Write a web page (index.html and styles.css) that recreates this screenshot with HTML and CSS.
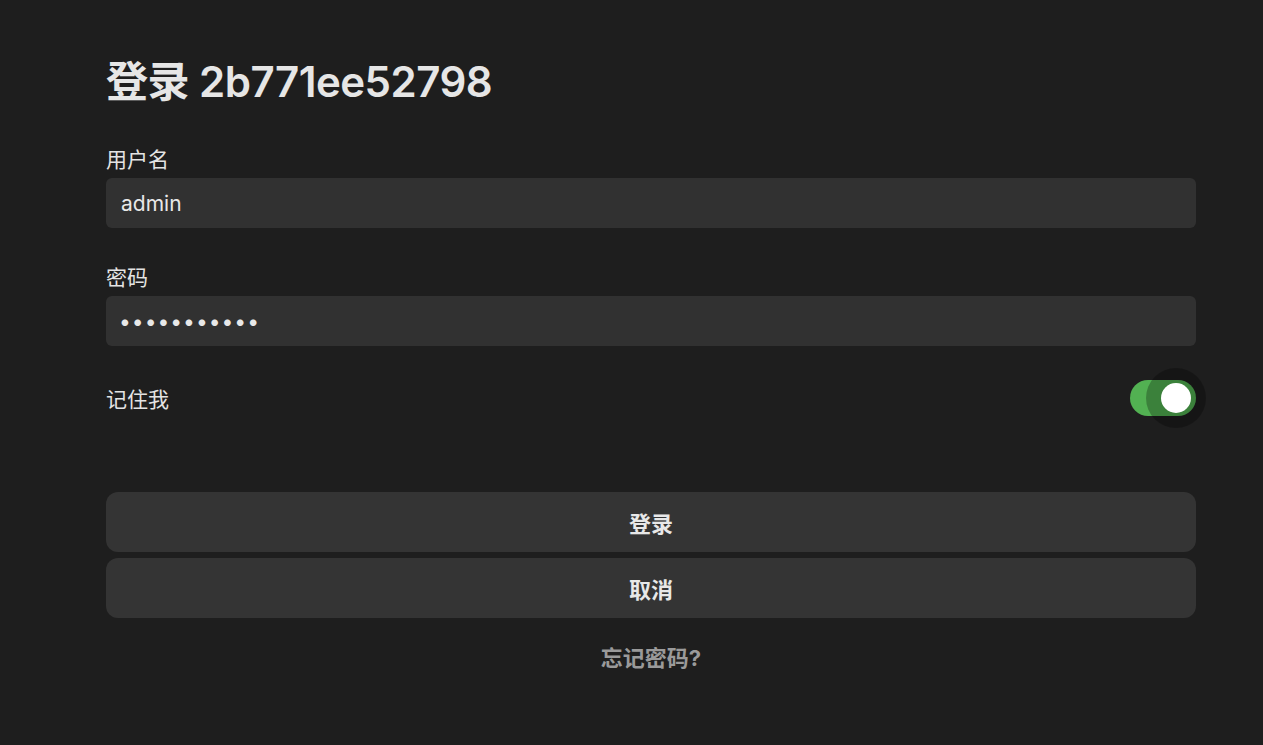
FILE: index.html
```html
<!DOCTYPE html>
<html lang="zh">
<head>
<meta charset="utf-8">
<link rel="stylesheet" href="styles.css">
</head>
<body>
<main class="page">
  <h1 class="title">登录 2b771ee52798</h1>
  <form class="form">
    <div class="field">
      <label class="label" for="u">用户名</label>
      <input class="input" id="u" type="text" value="admin">
    </div>
    <div class="field">
      <label class="label" for="p">密码</label>
      <input class="input input-pass" id="p" type="password" value="12345678901">
    </div>
    <div class="remember">
      <span class="remember-label">记住我</span>
      <span class="switch">
        <span class="switch-track"></span>
        <span class="switch-halo"></span>
        <span class="switch-knob"></span>
      </span>
    </div>
    <div class="actions">
      <button type="button" class="btn">登录</button>
      <button type="button" class="btn">取消</button>
    </div>
    <a class="forgot" href="#">忘记密码?</a>
  </form>
</main>
</body>
</html>
```
FILE: styles.css
```css
html, body {
  margin: 0;
  padding: 0;
  background: #1e1e1e;
  color: #e8e8e8;
  font-family: Inter, "Noto Sans CJK SC", sans-serif;
}
.page {
  padding: 52px 67px 40px 106px;
}
.title {
  margin: 0 0 34px 0;
  font-size: 42px;
  line-height: 60px;
  font-weight: 600;
  color: #e6e6e6;
  letter-spacing: -0.5px;
}
.form {
  display: flex;
  flex-direction: column;
}
.field {
  display: flex;
  flex-direction: column;
  gap: 4px;
  margin-bottom: 36px;
}
.label {
  font-size: 21px;
  line-height: 28px;
  color: #e4e4e4;
}
.input {
  box-sizing: border-box;
  height: 50px;
  border: none;
  outline: none;
  border-radius: 6px;
  background: #313131;
  color: #e8e8e8;
  font-family: inherit;
  font-size: 21px;
  padding: 0 15px;
}
.input-pass {
  letter-spacing: 1px;
  padding-left: 13px;
}
.remember {
  display: flex;
  align-items: center;
  justify-content: space-between;
  height: 60px;
  margin-top: -14px;
}
.remember-label {
  font-size: 21px;
  color: #e4e4e4;
}
.switch {
  position: relative;
  width: 66px;
  height: 36px;
}
.switch-track {
  position: absolute;
  inset: 0;
  border-radius: 18px;
  background: #52b152;
}
.switch-halo {
  position: absolute;
  width: 60px;
  height: 60px;
  border-radius: 50%;
  left: 16px;
  top: -12px;
  background: rgba(0, 0, 0, 0.27);
}
.switch-knob {
  position: absolute;
  width: 30px;
  height: 30px;
  border-radius: 50%;
  background: #ffffff;
  left: 31px;
  top: 3px;
}
.actions {
  display: flex;
  flex-direction: column;
  gap: 6px;
  margin-top: 64px;
}
.btn {
  height: 60px;
  border: none;
  border-radius: 12px;
  background: #343434;
  color: #e8e8e8;
  font-family: inherit;
  font-size: 22px;
  font-weight: 700;
}
.forgot {
  align-self: center;
  margin-top: 22px;
  font-size: 22px;
  font-weight: 700;
  color: #9a9a9a;
  text-decoration: none;
}
```
